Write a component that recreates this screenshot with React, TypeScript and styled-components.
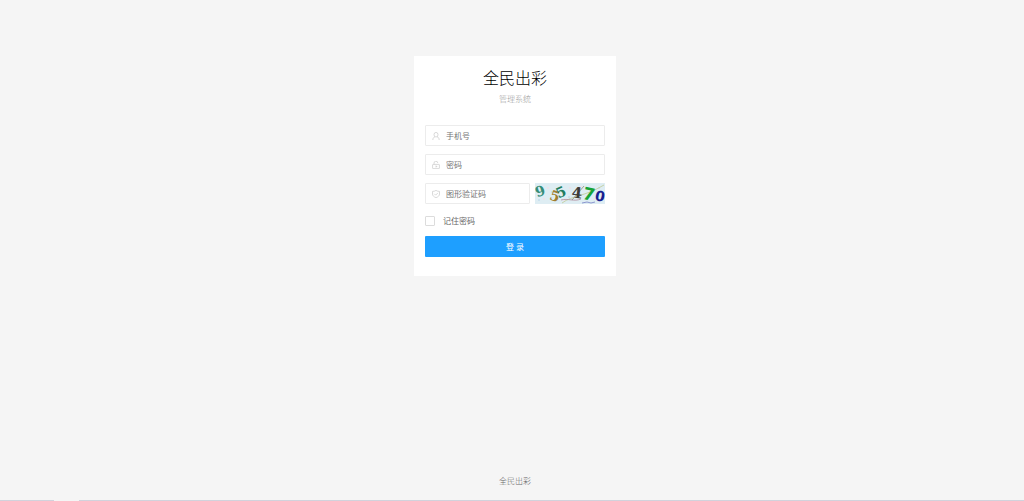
import React from "react";
import styled, { createGlobalStyle } from "styled-components";

const GlobalStyle = createGlobalStyle`
  *, *::before, *::after { box-sizing: border-box; }
  body {
    margin: 0;
    background: #f5f5f5;
    color: #666;
    font-family: "Noto Sans CJK SC", sans-serif;
    font-size: 8px;
    line-height: 12px;
  }
`;

const Page = styled.div`
  min-height: 100vh;
  display: flex;
  flex-direction: column;
`;

const Main = styled.main`
  flex: 1;
  display: flex;
  flex-direction: column;
  align-items: center;
  padding: 56px 0 24px 6px;
`;

const Card = styled.form`
  width: 202px;
  max-width: 100%;
  padding: 9px 11px 19px;
  background: #fff;
`;

const Header = styled.header`
  text-align: center;
  margin-bottom: 20px;
`;

const Title = styled.h1`
  margin: 0 0 4px;
  font-size: 16px;
  line-height: 24px;
  font-weight: 300;
  color: #000;
`;

const Subtitle = styled.p`
  margin: 0;
  font-weight: 300;
  color: #999;
`;

const Fields = styled.div`
  display: flex;
  flex-direction: column;
  gap: 8px;
`;

const Row = styled.div`
  display: flex;
  gap: 5px;
`;

const Field = styled.label`
  flex: 1;
  min-width: 0;
  height: 21px;
  display: flex;
  align-items: center;
  gap: 6px;
  padding: 0 6px;
  border: 1px solid #ececec;
  border-radius: 1px;
  background: #fff;

  svg { flex: none; }
`;

const Input = styled.input`
  flex: 1;
  min-width: 0;
  padding: 0;
  border: 0;
  outline: 0;
  background: transparent;
  color: #555;
  font: inherit;

  &::placeholder { color: #757575; opacity: 1; }
`;

const CaptchaButton = styled.button`
  flex: none;
  width: 70px;
  height: 21px;
  padding: 0;
  border: 0;
  background: #e0edf2;
  cursor: pointer;

  svg { display: block; }
`;

const Remember = styled.label`
  display: flex;
  align-items: center;
  gap: 8px;
  margin: 12px 0 10px;
  height: 10px;
`;

const Checkbox = styled.input`
  appearance: none;
  width: 10px;
  height: 10px;
  margin: 0;
  border: 1px solid #dcdcdc;
  border-radius: 1px;
  background: #fff;

  &:checked { background: #1e9fff; border-color: #1e9fff; }
`;

const Submit = styled.button`
  display: block;
  width: 100%;
  height: 21px;
  padding: 0;
  border: 0;
  border-radius: 1px;
  background: #1e9fff;
  color: #fff;
  font: inherit;
  cursor: pointer;
`;

const Footer = styled.footer`
  padding: 0 0 13px 6px;
  text-align: center;
  font-weight: 300;
`;

const BottomEdge = styled.div`
  display: flex;
  gap: 25px;
  height: 1px;
`;

const Edge = styled.div<{ $short?: boolean }>`
  flex: ${(p) => (p.$short ? "0 0 54px" : "1")};
  background: #d2d2dc;
`;

const iconProps = {
  width: 8,
  height: 8,
  viewBox: "0 0 16 16",
  fill: "none",
  stroke: "#cfcfcf",
  strokeWidth: 1.6,
  "aria-hidden": true,
} as const;

const UserIcon = () => (
  <svg {...iconProps}>
    <ellipse cx="8" cy="5.4" rx="4" ry="4.6" />
    <path d="M1.6 16c.2-3.500 1.700-5.700 4.400-6.600M10 9.400c2.700.9 4.200 3.100 4.400 6.600" />
  </svg>
);

const LockIcon = () => (
  <svg {...iconProps}>
    <rect x="1.2" y="6.800" width="13.6" height="8.400" rx="1" />
    <path d="M4 6.800V4.600a3.800 3.800 0 0 1 7.600-.6M8 9v4M8 11h2.500" />
  </svg>
);

const ShieldIcon = () => (
  <svg {...iconProps}>
    <path d="M8 .8c2 1.400 4.300 2 7 2v5.200c0 3.500-3 6-7 7.300C4 14 1 11.500 1 8V2.800c2.700 0 5-.6 7-2z" />
    <path d="M4.600 7.600l2.700 2.700 4.500-4.500" />
  </svg>
);

const CaptchaArt = () => (
  <svg
    width="70"
    height="21"
    viewBox="0 0 70 21"
    role="img"
    aria-label="图形验证码"
    fontFamily="DejaVu Serif, serif"
    fontWeight="700"
    textAnchor="middle"
  >
    <rect width="70" height="21" fill="#deedf3" />
    <g fill="#efdfe9">
      <circle cx="13" cy="5" r="1" /><circle cx="9" cy="16" r="1" />
      <circle cx="29" cy="17" r="1" /><circle cx="35" cy="5" r="1" />
      <circle cx="46" cy="4" r="1" /><circle cx="59" cy="16" r="1" />
    </g>
    <g fill="#c3ddec">
      <circle cx="4" cy="17" r="1" /><circle cx="17" cy="9" r="1" />
      <circle cx="34" cy="14" r="1" /><circle cx="64" cy="5" r="1" />
    </g>
    <path d="M27 20C38 12 49 14 69 2" stroke="#c6d2a8" fill="none" />
    <path d="M26 17c7-2 13 2 20-1" stroke="#b18c9c" strokeWidth=".8" fill="none" />
    <path d="M37 17L49 3" stroke="#8d8b76" strokeWidth=".8" fill="none" />
    <path d="M47 20l5-1 4 1 4-1" stroke="#8c97cf" fill="none" />
    <text x="5" y="13" fontSize="14" fill="#358d78" transform="rotate(-18 5 8)">9</text>
    <text x="20" y="18" fontSize="14" fill="#a17d2d" transform="rotate(18 20 13)">5</text>
    <text x="26" y="14" fontSize="14" fill="#227d60" transform="rotate(-24 26 9)">5</text>
    <text x="42" y="15" fontSize="15" fill="#3d3c38" transform="rotate(6 42 10)">4</text>
    <text x="54" y="17" fontSize="17" fill="#16a336" fontFamily="DejaVu Sans, sans-serif" transform="rotate(12 54 11)">7</text>
    <text x="65" y="18" fontSize="14" fill="#17208f" fontFamily="DejaVu Sans, sans-serif" transform="rotate(12 65 13)">0</text>
  </svg>
);

export default function App() {
  return (
    <Page>
      <GlobalStyle />
      <Main>
        <Card onSubmit={(e) => e.preventDefault()}>
          <Header>
            <Title>全民出彩</Title>
            <Subtitle>管理系统</Subtitle>
          </Header>
          <Fields>
            <Row>
              <Field>
                <UserIcon />
                <Input type="text" placeholder="手机号" aria-label="手机号" />
              </Field>
            </Row>
            <Row>
              <Field>
                <LockIcon />
                <Input type="password" placeholder="密码" aria-label="密码" />
              </Field>
            </Row>
            <Row>
              <Field>
                <ShieldIcon />
                <Input type="text" placeholder="图形验证码" aria-label="图形验证码" />
              </Field>
              <CaptchaButton type="button">
                <CaptchaArt />
              </CaptchaButton>
            </Row>
          </Fields>
          <Remember>
            <Checkbox type="checkbox" />
            记住密码
          </Remember>
          <Submit type="submit">登 录</Submit>
        </Card>
      </Main>
      <Footer>全民出彩</Footer>
      <BottomEdge>
        <Edge $short />
        <Edge />
      </BottomEdge>
    </Page>
  );
}
